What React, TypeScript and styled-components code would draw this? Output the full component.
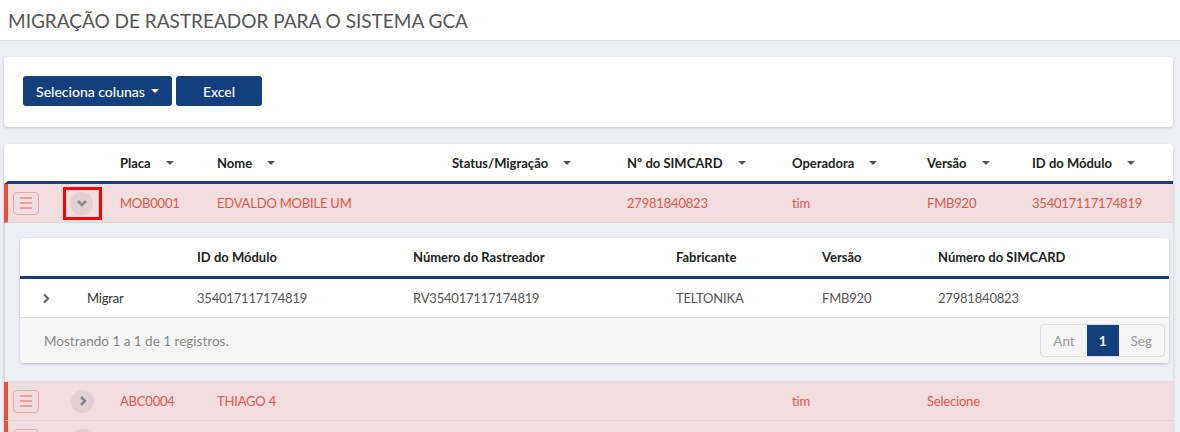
import styled, { createGlobalStyle } from "styled-components";

const GlobalStyle = createGlobalStyle`
  body {
    margin: 0;
    background: #edeef6;
    font-family: Lato, "Liberation Sans", sans-serif;
    font-size: 13px;
    color: #333;
  }
`;

const mainCols = "52px 50px 97px 235px 175px 165px 135px 105px 1fr";
const innerCols = "57px 110px 216px 263px 146px 116px 1fr";

const mainHead = [
  "Placa",
  "Nome",
  "Status/Migração",
  "Nº do SIMCARD",
  "Operadora",
  "Versão",
  "ID do Módulo",
];

const rows = [
  {
    placa: "MOB0001",
    nome: "EDVALDO MOBILE UM",
    status: "",
    sim: "27981840823",
    operadora: "tim",
    versao: "FMB920",
    modulo: "354017117174819",
    open: true,
  },
  {
    placa: "ABC0004",
    nome: "THIAGO 4",
    status: "",
    sim: "",
    operadora: "tim",
    versao: "Selecione",
    modulo: "",
    open: false,
  },
  {
    placa: "",
    nome: "",
    status: "",
    sim: "",
    operadora: "",
    versao: "",
    modulo: "",
    open: false,
  },
];

const innerHead = [
  "",
  "",
  "ID do Módulo",
  "Número do Rastreador",
  "Fabricante",
  "Versão",
  "Número do SIMCARD",
];

export default function App() {
  return (
    <>
      <GlobalStyle />
      <TopBar>
        <Title>MIGRAÇÃO DE RASTREADOR PARA O SISTEMA GCA</Title>
      </TopBar>
      <Page>
        <Card>
          <Toolbar>
            <Btn>
              Seleciona colunas <Caret light />
            </Btn>
            <Btn wide>Excel</Btn>
          </Toolbar>
        </Card>

        <TableCard>
          <HeadRow>
            <Cell />
            <Cell />
            {mainHead.map((h) => (
              <Cell key={h}>
                {h}
                <Caret />
              </Cell>
            ))}
          </HeadRow>
          {rows.map((r, i) => (
            <div key={i}>
              <DataRow>
                <Cell>
                  <MenuBtn>
                    <span />
                    <span />
                    <span />
                  </MenuBtn>
                </Cell>
                <Cell>
                  {r.open ? (
                    <Marked>
                      <Toggle>
                        <svg width="12" height="8" viewBox="0 0 12 8">
                          <path
                            d="M2 2l4 4 4-4"
                            fill="none"
                            stroke="#8a8a8a"
                            strokeWidth="2.6"
                          />
                        </svg>
                      </Toggle>
                    </Marked>
                  ) : (
                    <Toggle>
                      <svg width="8" height="12" viewBox="0 0 8 12">
                        <path
                          d="M2 2l4 4-4 4"
                          fill="none"
                          stroke="#7d8a96"
                          strokeWidth="2.6"
                        />
                      </svg>
                    </Toggle>
                  )}
                </Cell>
                <Cell>{r.placa}</Cell>
                <Cell>{r.nome}</Cell>
                <Cell>{r.status}</Cell>
                <Cell>{r.sim}</Cell>
                <Cell>{r.operadora}</Cell>
                <Cell>{r.versao}</Cell>
                <Cell>{r.modulo}</Cell>
              </DataRow>
              {r.open && (
                <Expanded>
                  <InnerCard>
                    <InnerHead>
                      {innerHead.map((h, j) => (
                        <InnerHeadCell key={j}>{h}</InnerHeadCell>
                      ))}
                    </InnerHead>
                    <InnerRow>
                      <InnerCell>
                        <svg width="8" height="11" viewBox="0 0 8 11">
                          <path
                            d="M2 1.5l4 4-4 4"
                            fill="none"
                            stroke="#666"
                            strokeWidth="2.2"
                          />
                        </svg>
                      </InnerCell>
                      <InnerCell dark>Migrar</InnerCell>
                      <InnerCell>354017117174819</InnerCell>
                      <InnerCell>RV354017117174819</InnerCell>
                      <InnerCell>TELTONIKA</InnerCell>
                      <InnerCell>FMB920</InnerCell>
                      <InnerCell>27981840823</InnerCell>
                    </InnerRow>
                    <Footer>
                      <Info>Mostrando 1 a 1 de 1 registros.</Info>
                      <Pager>
                        <PageBtn>Ant</PageBtn>
                        <PageBtn active>1</PageBtn>
                        <PageBtn>Seg</PageBtn>
                      </Pager>
                    </Footer>
                  </InnerCard>
                </Expanded>
              )}
            </div>
          ))}
        </TableCard>
      </Page>
    </>
  );
}

const TopBar = styled.div`
  height: 41px;
  background: #fff;
  border-bottom: 1px solid #dcdce4;
  box-sizing: border-box;
  display: flex;
  align-items: center;
  padding-left: 8px;
`;

const Title = styled.h1`
  margin: 0;
  font-size: 19px;
  font-weight: 400;
  color: #555;
`;

const Page = styled.div`
  padding: 16px 7px 0 4px;
  display: flex;
  flex-direction: column;
  gap: 17px;
`;

const Card = styled.div`
  background: #fff;
  border-radius: 4px;
  box-shadow: 0 1px 3px rgba(0, 0, 0, 0.18);
`;

const Toolbar = styled.div`
  height: 70px;
  padding: 19px;
  box-sizing: border-box;
  display: flex;
  gap: 4px;
`;

const Btn = styled.button<{ wide?: boolean }>`
  height: 30px;
  width: ${(p) => (p.wide ? "86px" : "149px")};
  border: none;
  border-radius: 3px;
  background: #143f7e;
  color: #fff;
  font-family: inherit;
  font-size: 14px;
  font-weight: 500;
  display: flex;
  align-items: center;
  justify-content: center;
  padding: 0;
`;

const Caret = styled.span<{ light?: boolean }>`
  display: inline-block;
  width: 0;
  height: 0;
  border-left: 4px solid transparent;
  border-right: 4px solid transparent;
  border-top: 4px solid ${(p) => (p.light ? "#fff" : "#555")};
  margin-left: ${(p) => (p.light ? "6px" : "15px")};
  vertical-align: middle;
`;

const TableCard = styled.div`
  background: #fff;
  border-radius: 4px 4px 0 0;
  box-shadow: 0 1px 3px rgba(0, 0, 0, 0.18);
  overflow: hidden;
  font-size: 13.5px;
`;

const HeadRow = styled.div`
  display: grid;
  grid-template-columns: ${mainCols};
  height: 40px;
  border-left: 4px solid transparent;
  border-bottom: 3px solid #173f7c;
  box-sizing: border-box;
  align-items: center;
  font-weight: 700;
  font-size: 13px;
  color: #222;
`;

const Cell = styled.div`
  padding-left: 10px;
  display: flex;
  align-items: center;
  white-space: nowrap;
`;

const DataRow = styled.div`
  display: grid;
  grid-template-columns: ${mainCols};
  height: 39px;
  box-sizing: border-box;
  align-items: center;
  background: #f2dede;
  border-left: 4px solid #e4503d;
  border-bottom: 1px solid #dcd4d8;
  color: #e2574a;
  font-size: 13px;
  letter-spacing: -0.2px;
  & > div:first-child {
    padding-left: 5px;
  }
  & > div:nth-child(2) {
    padding-left: 3px;
  }
`;

const MenuBtn = styled.div`
  width: 26px;
  height: 23px;
  box-sizing: border-box;
  border: 1px solid #f3a6a3;
  border-radius: 4px;
  display: flex;
  flex-direction: column;
  align-items: center;
  justify-content: center;
  gap: 3px;
  & span {
    width: 12px;
    height: 2px;
    background: #f19d9a;
  }
`;

const Marked = styled.div`
  width: 39px;
  height: 33px;
  box-sizing: border-box;
  border: 3px solid #f00;
  display: flex;
  align-items: center;
  justify-content: center;
  padding-right: 2px;
`;

const Toggle = styled.div`
  width: 23px;
  height: 23px;
  border-radius: 50%;
  background: #e4cfd1;
  display: flex;
  align-items: center;
  justify-content: center;
  margin-left: 8px;
  ${Marked} & {
    margin-left: 0;
  }
`;

const Expanded = styled.div`
  background: #edeef6;
  padding: 15px 4px 18px 15px;
  border-left: 1px solid #d8d8e2;
  border-bottom: 1px solid #dcdce4;
`;

const InnerCard = styled.div`
  background: #fff;
  border-radius: 4px;
  box-shadow: 0 1px 3px rgba(0, 0, 0, 0.2);
  overflow: hidden;
  font-size: 13px;
`;

const InnerHead = styled.div`
  display: grid;
  grid-template-columns: ${innerCols};
  height: 41px;
  box-sizing: border-box;
  border-bottom: 3px solid #173f7c;
  align-items: center;
  font-weight: 700;
  color: #222;
`;

const InnerHeadCell = styled.div`
  padding-left: 10px;
  white-space: nowrap;
`;

const InnerRow = styled.div`
  display: grid;
  grid-template-columns: ${innerCols};
  height: 38px;
  align-items: center;
  border-bottom: 1px solid #ddd;
  color: #555;
  letter-spacing: -0.2px;
`;

const InnerCell = styled.div<{ dark?: boolean }>`
  padding-left: 10px;
  white-space: nowrap;
  color: ${(p) => (p.dark ? "#333" : "#555")};
  &:first-child {
    padding-left: 22px;
    display: flex;
  }
`;

const Footer = styled.div`
  background: #f5f5f5;
  height: 45px;
  display: flex;
  align-items: center;
  justify-content: space-between;
  padding: 0 4px 0 24px;
  font-size: 13.5px;
`;

const Info = styled.span`
  color: #888;
`;

const Pager = styled.div`
  display: flex;
  border: 1px solid #ddd;
  border-radius: 4px;
  overflow: hidden;
  height: 33px;
  box-sizing: border-box;
`;

const PageBtn = styled.div<{ active?: boolean }>`
  padding: 0 12px;
  display: flex;
  align-items: center;
  background: ${(p) => (p.active ? "#143f7e" : "transparent")};
  color: ${(p) => (p.active ? "#fff" : "#999")};
  font-weight: ${(p) => (p.active ? 700 : 400)};
`;
